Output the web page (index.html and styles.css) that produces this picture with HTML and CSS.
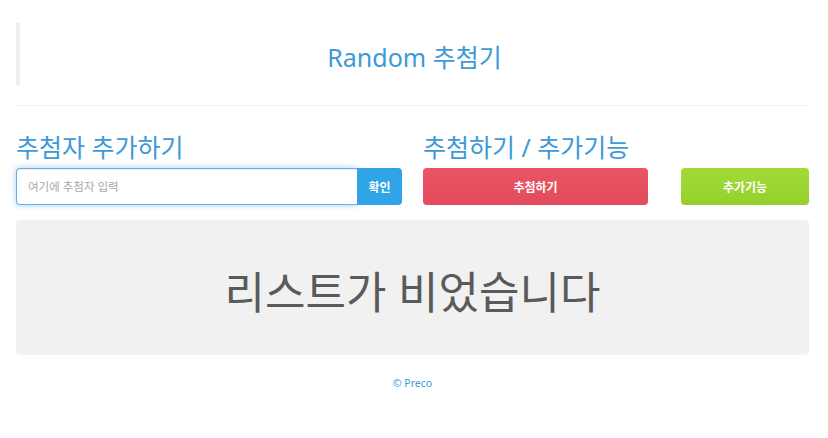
FILE: index.html
```html
<!DOCTYPE html>
<html lang="ko">
<head>
    <meta charset="UTF-8">
    <title>Random 추첨기</title>
    <link rel="stylesheet" href="styles.css">
</head>
<body>
    <div class="container">
        <blockquote class="title-box">
            <h2 class="title">Random 추첨기</h2>
        </blockquote>
        <hr class="divider">

        <div class="row">
            <div class="col">
                <h3 class="section-title">추첨자 추가하기</h3>
                <div class="input-group">
                    <input type="text" class="name-input" placeholder="여기에 추첨자 입력">
                    <button class="btn btn-confirm">확인</button>
                </div>
            </div>
            <div class="col">
                <h3 class="section-title">추첨하기 / 추가기능</h3>
                <div class="action-row">
                    <button class="btn btn-draw">추첨하기</button>
                    <button class="btn btn-extra">추가기능</button>
                </div>
            </div>
        </div>

        <div class="list-box">
            <p class="list-empty">리스트가 비었습니다</p>
        </div>

        <footer class="footer">© Preco</footer>
    </div>
</body>
</html>
```

FILE: styles.css
```css
body {
    margin: 0;
    font-family: "Noto Sans", "Noto Sans CJK KR", sans-serif;
    background-color: #fff;
    color: #555;
}
.container {
    width: 793px;
    margin-left: 16px;
}
.title-box {
    margin: 23px 0 0 0;
    height: 62px;
    border-left: 4px solid #eee;
    display: flex;
    align-items: center;
    justify-content: center;
}
.title {
    margin: 4px 0 0 0;
    font-size: 25px;
    font-weight: 400;
    color: #3d9ad8;
}
.divider {
    margin: 20px 0 0 0;
    border: 0;
    border-top: 1px solid #f0f0f0;
}
.row {
    display: grid;
    grid-template-columns: 1fr 1fr;
    column-gap: 21px;
}
.section-title {
    margin: 27px 0 6px 0;
    font-size: 25px;
    line-height: 29px;
    font-weight: 400;
    color: #3d9ad8;
}
.input-group {
    display: flex;
    height: 37px;
}
.name-input {
    flex: 1;
    box-sizing: border-box;
    height: 37px;
    padding: 0 11px;
    border: 1px solid #66afe9;
    border-right: 0;
    border-radius: 4px 0 0 4px;
    box-shadow: inset 0 1px 1px rgba(0,0,0,0.075), 0 0 6px rgba(102,175,233,0.6);
    font-family: inherit;
    font-size: 11.5px;
    color: #555;
    outline: none;
}
.name-input::placeholder {
    color: #a8a8a8;
}
.btn {
    border: none;
    color: #fff;
    font-family: inherit;
    font-size: 12px;
    font-weight: 700;
    cursor: pointer;
}
.btn-confirm {
    width: 45px;
    background-color: #2fa4e7;
    border-radius: 0 4px 4px 0;
}
.action-row {
    display: flex;
    justify-content: space-between;
    height: 37px;
}
.btn-draw {
    width: 225px;
    border-radius: 4px;
    background: linear-gradient(#ea5565, #e24b5b);
}
.btn-extra {
    width: 128px;
    border-radius: 4px;
    background: linear-gradient(#a3da38, #94d02c);
}
.list-box {
    margin-top: 15px;
    height: 134px;
    background-color: #f1f1f1;
    border-radius: 4px;
    box-shadow: 0 1px 1px rgba(0,0,0,0.05);
    display: flex;
    align-items: center;
    justify-content: center;
}
.list-empty {
    margin: 6px 0 0 0;
    font-size: 44px;
    font-weight: 400;
    color: #5a5a5a;
}
.footer {
    margin-top: 21px;
    text-align: center;
    font-size: 10.5px;
    line-height: 16px;
    color: #3d9ad8;
}
```
